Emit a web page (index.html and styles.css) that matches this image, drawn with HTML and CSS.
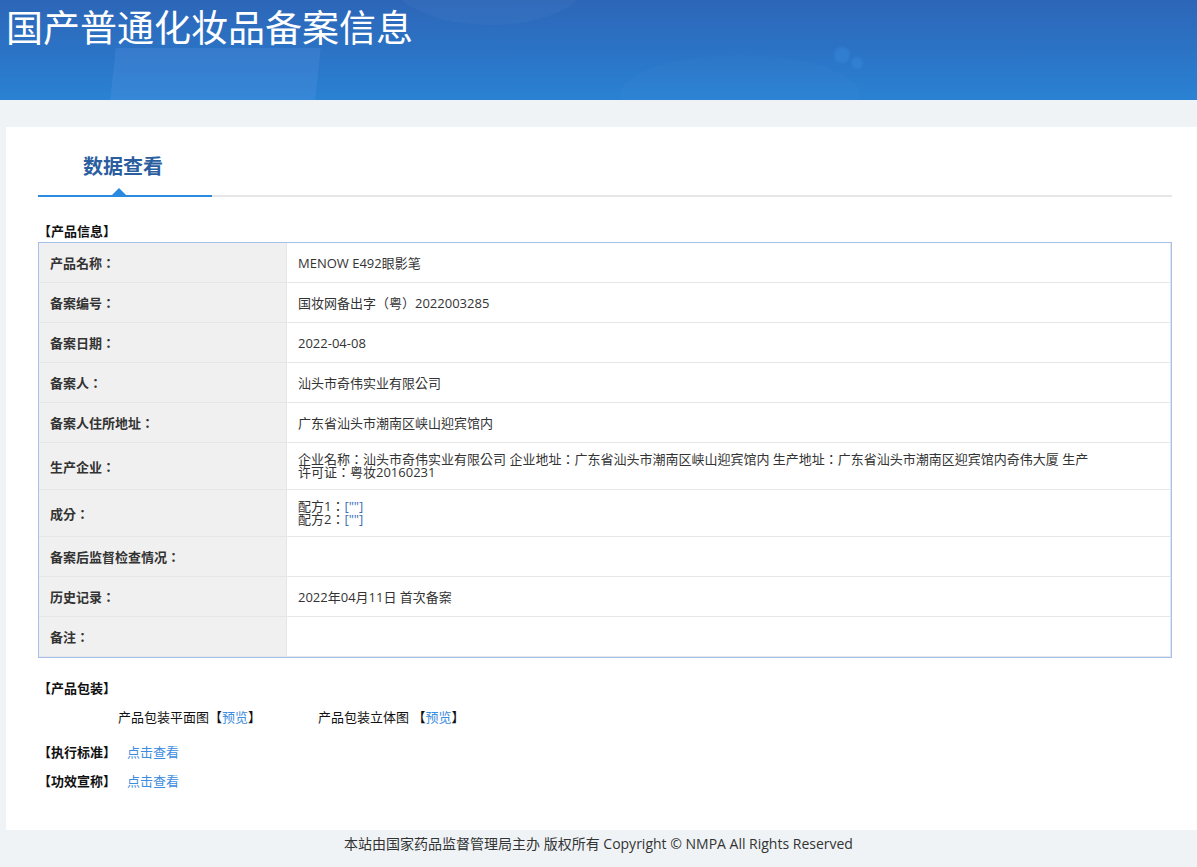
FILE: index.html
```html
<!DOCTYPE html>
<html lang="zh-CN">
<head>
    <meta charset="UTF-8">
    <meta name="viewport" content="width=device-width, initial-scale=1.0">
    <title>国产普通化妆品备案信息</title>
    <link rel="stylesheet" href="styles.css">
</head>
<body>
    <div class="banner">
        <span class="blob blob-a"></span>
        <span class="blob blob-b"></span>
        <span class="blob blob-c"></span>
        <span class="dot dot-a"></span>
        <span class="dot dot-b"></span>
        <h1>国产普通化妆品备案信息</h1>
    </div>

    <div class="main">
        <div class="tab-bar">
            <div class="tab active">数据查看</div>
        </div>

        <div class="section-title first">【产品信息】</div>
        <table class="info">
            <tr>
                <th>产品名称：</th>
                <td>MENOW E492眼影笔</td>
            </tr>
            <tr>
                <th>备案编号：</th>
                <td>国妆网备出字（粤）2022003285</td>
            </tr>
            <tr>
                <th>备案日期：</th>
                <td>2022-04-08</td>
            </tr>
            <tr>
                <th>备案人：</th>
                <td>汕头市奇伟实业有限公司</td>
            </tr>
            <tr>
                <th>备案人住所地址：</th>
                <td>广东省汕头市潮南区峡山迎宾馆内</td>
            </tr>
            <tr class="tall">
                <th>生产企业：</th>
                <td class="multi">企业名称：汕头市奇伟实业有限公司 企业地址：广东省汕头市潮南区峡山迎宾馆内 生产地址：广东省汕头市潮南区迎宾馆内奇伟大厦 生产<br>许可证：粤妆20160231</td>
            </tr>
            <tr class="tall">
                <th>成分：</th>
                <td class="multi">配方1：<span class="raw">[""]</span><br>配方2：<span class="raw">[""]</span></td>
            </tr>
            <tr>
                <th>备案后监督检查情况：</th>
                <td></td>
            </tr>
            <tr>
                <th>历史记录：</th>
                <td>2022年04月11日 首次备案</td>
            </tr>
            <tr class="last">
                <th>备注：</th>
                <td></td>
            </tr>
        </table>

        <div class="section-title pack">【产品包装】</div>
        <div class="pack-list">
            <span class="pack-item">产品包装平面图【<a href="#">预览</a>】</span>
            <span class="pack-item">产品包装立体图 【<a href="#">预览</a>】</span>
        </div>

        <div class="section-title line first-line">【执行标准】<a href="#">点击查看</a></div>
        <div class="section-title line">【功效宣称】<a href="#">点击查看</a></div>
    </div>

    <div class="footer">本站由国家药品监督管理局主办 版权所有 Copyright © NMPA All Rights Reserved</div>
</body>
</html>
```

FILE: styles.css
```css
body {
    margin: 0;
    background: #eff3f6;
    font-family: "Open Sans", "Noto Sans CJK SC", sans-serif;
    color: #333;
    font-size: 13px;
}
a {
    color: #3c8ce0;
    text-decoration: none;
}

/* top banner */
.banner {
    position: relative;
    height: 100px;
    overflow: hidden;
    background: linear-gradient(180deg, #2d66b8 0%, #2b74c6 55%, #2a82d3 100%);
}
.banner h1 {
    position: relative;
    margin: 0;
    padding: 0 6px;
    line-height: 52px;
    font-family: "Noto Sans CJK SC", sans-serif;
    font-size: 37px;
    font-weight: normal;
    color: #fff;
}
.blob {
    position: absolute;
    display: block;
}
.blob-a {
    left: 112px;
    top: 48px;
    width: 205px;
    height: 70px;
    background: rgba(120, 170, 240, 0.16);
    transform: skewX(-6deg);
}
.blob-b {
    left: 390px;
    top: -70px;
    width: 200px;
    height: 95px;
    border-radius: 50%;
    background: rgba(255, 255, 255, 0.03);
}
.blob-c {
    left: 620px;
    top: 55px;
    width: 240px;
    height: 80px;
    border-radius: 50%;
    background: rgba(80, 160, 230, 0.07);
}
.dot {
    position: absolute;
    display: block;
    border-radius: 50%;
    background: rgba(60, 140, 225, 0.4);
    filter: blur(1px);
}
.dot-a {
    left: 834px;
    top: 47px;
    width: 16px;
    height: 16px;
}
.dot-b {
    left: 851px;
    top: 57px;
    width: 12px;
    height: 12px;
}

/* white content card */
.main {
    background: #fff;
    margin: 27px 0 0 6px;
    padding: 0 25px 41px 32px;
}
.tab-bar {
    display: flex;
    border-bottom: 2px solid #e6e6e6;
}
.tab {
    position: relative;
    width: 174px;
    padding: 27px 0 17px;
    line-height: 24px;
    text-align: center;
    font-family: "Noto Sans CJK SC", sans-serif;
    font-size: 20px;
    font-weight: bold;
    color: #2b5e9f;
    text-indent: -4px;
}
.tab.active {
    border-bottom: 2px solid #2a8ae0;
    margin-bottom: -2px;
}
.tab.active::after {
    content: "";
    position: absolute;
    left: 74px;
    bottom: 0;
    border-left: 7px solid transparent;
    border-right: 7px solid transparent;
    border-bottom: 7px solid #2a8ae0;
}

.section-title {
    font-weight: bold;
    line-height: 16px;
    color: #111;
}
.section-title.first {
    margin-top: 26px;
    margin-bottom: 3px;
}
.section-title.pack {
    margin-top: 22px;
}
.section-title.line {
    margin-top: 13px;
}
.section-title.first-line {
    margin-top: 19px;
}
.section-title a {
    font-weight: normal;
    margin-left: 11px;
}

/* product info table; TC glyphs keep the full-width colons centred */
.info {
    width: 100%;
    border-collapse: separate;
    border-spacing: 0;
    border: 1px solid #a3c1ea;
    font-family: "Open Sans", "Noto Sans CJK TC", sans-serif;
    font-feature-settings: "locl" 0;
}
.info th,
.info td {
    height: 40px;
    padding: 0 11px;
    border-bottom: 1px solid #e6e6e6;
    text-align: left;
    vertical-align: middle;
    box-sizing: border-box;
}
.info th {
    width: 248px;
    border-right: 1px solid #e6e6e6;
    background: #f0f0f0;
    font-weight: bold;
    color: #333;
}
.info td {
    border-right: 1px solid #e6e6e6;
    color: #333;
}
.info tr.tall th,
.info tr.tall td {
    height: 47px;
}
.info td.multi {
    line-height: 13px;
}
.raw {
    color: #3a6fb8;
}

/* package previews */
.pack-list {
    display: flex;
    margin-top: 13px;
    padding-left: 80px;
    line-height: 16px;
    color: #111;
}
.pack-item {
    width: 200px;
}

.footer {
    padding: 6px 0 15px;
    line-height: 16px;
    text-align: center;
    font-size: 14px;
    color: #333;
}
```
